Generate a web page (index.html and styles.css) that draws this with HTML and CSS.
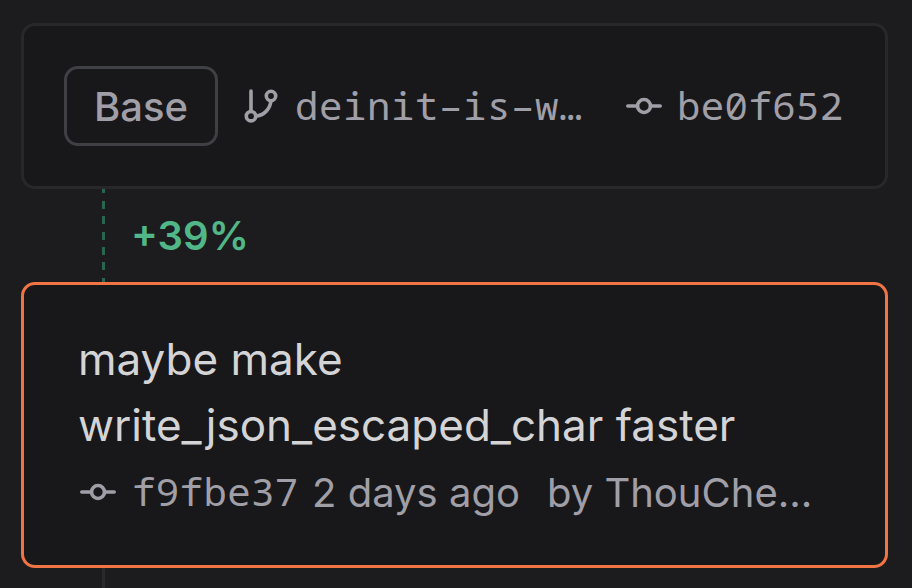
FILE: index.html
```html
<!DOCTYPE html>
<html lang="en">
<head>
<meta charset="utf-8">
<title>Comparison</title>
<link rel="stylesheet" href="styles.css">
</head>
<body>
<main class="timeline">
  <section class="card base">
    <span class="badge">Base</span>
    <svg class="icon branch" viewBox="0 0 36 40" aria-hidden="true"><path d="M7 5v20.500"/><circle cx="7" cy="30.200" r="4.700"/><circle cx="27" cy="10" r="4.700"/><path d="M27 14.700c-1 8.500-7 14.800-15.300 15.500"/></svg>
    <span class="mono branch-name">deinit<span class="dash">-</span>is<span class="dash">-</span>w…</span>
    <svg class="icon commit" viewBox="0 0 36 20" aria-hidden="true"><circle cx="18" cy="10" r="6.500"/><path d="M1.800 10h9.700M24.500 10h9.700"/></svg>
    <span class="mono base-hash">be0f652</span>
  </section>
  <div class="connector"><span class="change">+39%</span></div>
  <section class="card head">
    <h1 class="title">maybe make write_json_escaped_char faster</h1>
    <div class="meta">
      <svg class="icon commit" viewBox="0 0 36 20" aria-hidden="true"><circle cx="18" cy="10" r="6.500"/><path d="M1.800 10h9.700M24.500 10h9.700"/></svg>
      <span class="mono head-hash">f9fbe37</span>
      <span class="age">2 days ago</span>
      <span class="author">by ThouChe…</span>
    </div>
  </section>
  <div class="tail"></div>
</main>
</body>
</html>
```
FILE: styles.css
```css
* { box-sizing: border-box; }
body { margin: 0; background: #1c1c1e; color: #a09fa8; font-family: Inter, sans-serif; overflow: hidden; }
.timeline { display: flex; flex-direction: column; height: 588px; padding: 23px 24px 0 21px; }
.card { border: 3px solid #28282a; border-radius: 14px; background: #18181a; flex: none; }
.base { display: flex; align-items: center; height: 166px; padding: 0 40px; }
.badge { width: 154px; height: 80px; flex: none; border: 3px solid #3f3f46; border-radius: 14px; font-size: 40px; font-weight: 500; line-height: 75px; text-align: center; }
.icon { fill: none; stroke: currentColor; stroke-width: 3.6; stroke-linecap: round; flex: none; }
.branch { width: 36px; height: 40px; margin-left: 26px; }
.commit { width: 36px; height: 20px; }
.mono { padding-bottom: 4px; font-family: "Noto Sans Mono", "DejaVu Sans Mono", monospace; font-size: 39px; letter-spacing: 0.6px; white-space: pre; flex: none; }
.dash { text-shadow: 2.5px 0 currentColor, -2.5px 0 currentColor; }
.branch-name { width: 288px; margin-left: 15px; }
.base .commit { margin-left: 43px; }
.base-hash { margin-left: 15px; letter-spacing: 0.4px; }
.connector { height: 93px; flex: none; margin-left: 81px; padding: 23px 0 0 29px; background: repeating-linear-gradient(to bottom, #286650 0 8px, transparent 8px 15.5px) 0 -4px / 3px 100px no-repeat; }
.change { color: #52b788; font-size: 40px; font-weight: 600; line-height: 48px; }
.head { height: 286px; padding: 41px 54px 0; border-color: #f07444; }
.title { margin: 0; width: 700px; color: #d4d4d6; font-size: 44px; font-weight: 400; line-height: 66px; }
.meta { display: flex; align-items: center; height: 68px; font-size: 40px; white-space: pre; }
.meta .commit { margin-left: 2px; }
.head-hash { margin-left: 16px; letter-spacing: 0.4px; }
.age { margin-left: 13.5px; }
.author { margin-left: 27px; }
.tail { flex: 1; width: 3px; margin-left: 81px; background: #29292d; }
```
